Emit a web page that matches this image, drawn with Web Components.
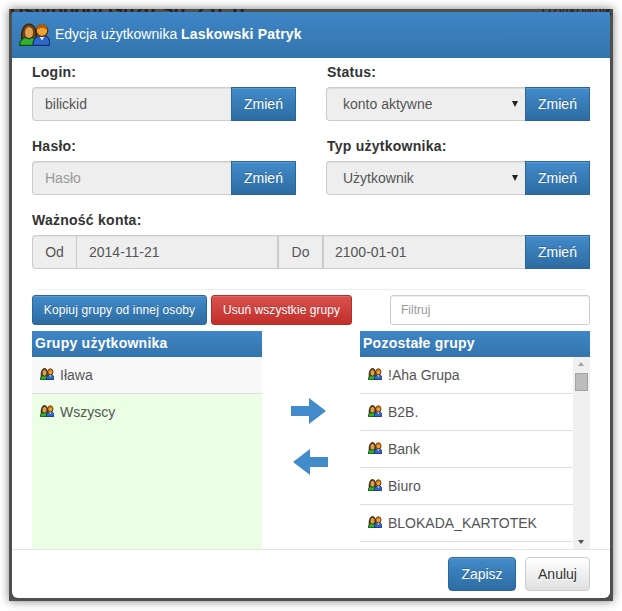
<!DOCTYPE html>
<html lang="pl"><head><meta charset="utf-8"><title>Edycja użytkownika</title>
<style>
html,body{margin:0;padding:0;background:#fff;font:14px/20px "Liberation Sans",Arial,sans-serif;color:#333}
b{letter-spacing:.2px}
</style></head><body>
<edit-screen>
  <people-icon slot="icon" size="big"></people-icon>
  <span slot="title">Edycja użytkownika <b>Laskowski Patryk</b></span>
  <field-row slot="r1">
    <input-group label="Login:" value="bilickid"></input-group>
    <input-group label="Status:" value="konto aktywne" select></input-group>
  </field-row>
  <field-row slot="r2">
    <input-group label="Hasło:" value="Hasło" muted></input-group>
    <input-group label="Typ użytkownika:" value="Użytkownik" select></input-group>
  </field-row>
  <date-row slot="r3"></date-row>
  <group-tools slot="tools"></group-tools>
  <group-list slot="left" heading="Grupy użytkownika" kind="left"></group-list>
  <transfer-arrows slot="mid"></transfer-arrows>
  <group-list slot="right" heading="Pozostałe grupy" kind="right"></group-list>
</edit-screen>
<script>
const def=(n,html,init)=>customElements.define(n,class extends HTMLElement{
  connectedCallback(){ if(this.shadowRoot)return; const r=this.attachShadow({mode:'open'}); r.innerHTML=typeof html==='function'?html(this):html; if(init)init(this,r);} });
const btnCss=`
.btn{box-sizing:border-box;display:flex;align-items:center;justify-content:center;font:14px/20px "Liberation Sans",Arial,sans-serif;color:#fff;
 background:linear-gradient(#428bca,#2d6ca2);border:1px solid #2b669a;text-shadow:0 -1px 0 rgba(0,0,0,.2);box-shadow:inset 0 1px 0 rgba(255,255,255,.15)}
`;
def('people-icon',h=>{const big=h.getAttribute('size')==='big';const s=big?[31,23]:[14,12];const w=big?1.2:1.9;return `<style>:host{display:inline-flex;flex:none}svg{display:block}</style>
<svg width="${s[0]}" height="${s[1]}" viewBox="0 0 31 23" preserveAspectRatio="none">
<path d="M3 18C1.500 10 4 1 10 1s8.500 9 7 17z" fill="#6e4212" stroke="#2a1a05" stroke-width="${w}"/>
<ellipse cx="10" cy="9.500" rx="4" ry="5.500" fill="#e0a050"/>
<path d="M.8 22.400C.3 17.500 4 15 7 14.500l3 1.500 3-1.500c3 .5 5.500 3 5 7.900z" fill="#35b035" stroke="#0d4d0d" stroke-width="${w}"/>
<path d="M14 22.400c-.5-6 3-8.900 6-9.400h6c3 .5 5 4 4.500 9.400z" fill="#2f68c8" stroke="#12306e" stroke-width="${w}"/>
<path d="M20.500 13.500l2.500 4 2.500-4z" fill="#e8eefc"/>
<circle cx="23" cy="7.500" r="5.800" fill="#f0a030" stroke="#4a2a08" stroke-width="${w}"/>
<path d="M17.500 7c0-4 2.500-6 5.500-6s5.500 2 5.500 6c-2-1.500-3.500-2-5.500-2s-3.500.5-5.500 2z" fill="#a85f12"/>
</svg>`});
def('edit-screen',`<style>
${btnCss}
:host{display:block;width:622px;height:611px;overflow:hidden;position:relative}
.frame{box-sizing:border-box;width:604px;height:592px;background:#4f4f4f;padding:3px;position:relative;overflow:hidden}
.shadow{box-shadow:0 0 9px rgba(0,0,0,.5);width:604px;height:592px;margin:9px 0 0 9px}
.bg{position:absolute;top:-9px;left:1px;right:1px;display:flex;justify-content:space-between;font:bold 19px/20px "Liberation Sans",Arial,sans-serif;color:#222}
.bg span+span{font:14px/20px "Liberation Sans",Arial,sans-serif}
.modal{position:relative;box-sizing:border-box;width:598px;height:586px;background:#fff;border-radius:0 0 6px 6px;display:flex;flex-direction:column;overflow:hidden}
header{flex:none;height:46px;box-sizing:border-box;background:linear-gradient(#3f86c6,#3274ad);color:#fff;display:flex;align-items:center;gap:5px;padding:0 0 2px 7px}
.body{flex:1;min-height:0;padding:4px 20px 0 20px;display:flex;flex-direction:column;overflow:hidden}
.cols{display:flex;flex:1;min-height:0;margin-top:6px}
.mid{flex:none;width:98px}
::slotted([slot=r2]){margin-top:15px}
::slotted([slot=r3]){margin-top:15px}
footer{flex:none;height:49px;box-sizing:border-box;border-top:1px solid #e5e5e5;display:flex;justify-content:flex-end;gap:9px;padding:7px 20px 0 0}
.btn{width:68px;height:34px;border-radius:4px}
.cancel{width:65px;color:#333;background:linear-gradient(#fff,#e0e0e0);border-color:#ccc;text-shadow:0 1px 0 #fff}
</style>
<div class="shadow"><div class="frame">
 <div class="bg"><span>Ustvobodi Guzd Sp. z o. o.</span><span>Użytkownik</span></div>
 <div class="modal">
  <header><slot name="icon"></slot><slot name="title"></slot></header>
  <div class="body">
   <slot name="r1"></slot><slot name="r2"></slot><slot name="r3"></slot><slot name="tools"></slot>
   <div class="cols"><slot name="left"></slot><div class="mid"><slot name="mid"></slot></div><slot name="right"></slot></div>
  </div>
  <footer><div class="btn">Zapisz</div><div class="btn cancel">Anuluj</div></footer>
 </div>
</div></div>`);
def('field-row',`<style>:host{display:flex;justify-content:space-between;width:558px}</style><slot></slot>`);
def('input-group',h=>`<style>
${btnCss}
:host{display:block;width:264px;margin-left:0}
label{display:block;font-weight:bold;letter-spacing:.25px;line-height:20px;height:20px;margin-bottom:5px;color:#333}
:host([select]) label{margin-left:1px}
.g{display:flex;height:34px}
.v{box-sizing:border-box;width:199px;height:34px;background:#eee;border:1px solid #ccc;border-right:0;border-radius:4px 0 0 4px;padding:6px 12px;color:${h.hasAttribute('muted')?'#999':'#555'};position:relative;box-shadow:inset 0 1px 1px rgba(0,0,0,.075)}
:host([select]) .v{padding-left:16px}
.caret{position:absolute;right:7px;top:13px;width:0;height:0;border:3.5px solid transparent;border-top:6px solid #222;border-bottom:0}
.btn{width:65px;height:34px;border-radius:0}
</style><label>${h.getAttribute('label')}</label>
<div class="g"><div class="v">${h.getAttribute('value')}${h.hasAttribute('select')?'<span class="caret"></span>':''}</div><div class="btn">Zmień</div></div>`);
def('date-row',`<style>
${btnCss}
:host{display:block;width:558px}
label{display:block;font-weight:bold;letter-spacing:.25px;height:20px;margin-bottom:5px}
.g{display:flex;height:34px;box-sizing:border-box}
.c{box-sizing:border-box;height:34px;background:#eee;border:1px solid #ccc;border-right:0;padding:6px 12px;color:#555;box-shadow:inset 0 1px 1px rgba(0,0,0,.05)}
.a{width:44px;border-radius:4px 0 0 4px;text-align:center;padding:6px 0}
.b{width:201px;border-left:1px solid #ccc}
.d{width:45px;text-align:center;padding:6px 0;border-left:2px solid #ccc}
.e{width:203px;border-left:2px solid #ccc;padding-left:11px}
.btn{width:65px;height:34px}
</style><label>Ważność konta:</label>
<div class="g"><div class="c a">Od</div><div class="c b">2014-11-21</div><div class="c d">Do</div><div class="c e">2100-01-01</div><div class="btn">Zmień</div></div>`);
def('group-tools',`<style>
${btnCss}
:host{display:block;width:558px}
hr{margin:20px 0 5px 5px;width:548px;height:1px;border:0;background:#eee}
.r{display:flex;height:30px}
.btn{height:30px;font-size:12px;line-height:18px;border-radius:3px;letter-spacing:.15px}
.k{width:175px}
.u{width:141px;margin-left:4px;background:linear-gradient(#d9534f,#c12e2a);border-color:#b92c28;letter-spacing:.05px}
.f{box-sizing:border-box;width:200px;height:30px;margin-left:auto;border:1px solid #ccc;border-radius:3px;background:#fff;color:#999;font-size:12px;line-height:28px;padding:0 10px;box-shadow:inset 0 1px 1px rgba(0,0,0,.075)}
</style><hr><div class="r"><div class="btn k">Kopiuj grupy od innej osoby</div><div class="btn u">Usuń wszystkie grupy</div><div class="f">Filtruj</div></div>`);
def('group-list',h=>{
 const left=h.getAttribute('kind')==='left';
 const items=left?['Iława','Wszyscy']:['!Aha Grupa','B2B.','Bank','Biuro','BLOKADA_KARTOTEK'];
 return `<style>
:host{display:flex;flex-direction:column;width:230px;height:218px}
.h{flex:none;height:26px;box-sizing:border-box;background:linear-gradient(#3f86c6,#3274ad);color:#fff;font-weight:bold;letter-spacing:.25px;line-height:25px;padding-left:3px}
.l{flex:1;min-height:0;display:flex;position:relative;overflow:hidden;${left?'background:#eaffe3':''}}
.items{flex:1;min-width:0}
.i{box-sizing:border-box;height:37px;padding:8px 8px;display:flex;align-items:flex-start;gap:6px;color:#555;border-bottom:1px solid #ddd;line-height:20px;background:${left?'#f9f9f9':'#fff'}}
.i people-icon{margin-top:3px}
.w{background:#eaffe3;border-bottom:0}
.sb{flex:none;width:17px;background:#f0f0f0;display:flex;flex-direction:column;align-items:center;position:relative}
.up,.dn{position:absolute;left:5px;width:0;height:0;border:4px solid transparent}
.up{top:5px;border-top:0;border-bottom:4px solid #a3a3a3;border-left-width:3.5px;border-right-width:3.5px}
.dn{bottom:5px;border-bottom:0;border-top:4px solid #505050;border-left-width:3.5px;border-right-width:3.5px}
.t{position:absolute;top:16px;left:2px;box-sizing:border-box;width:13px;height:18px;background:#bcbcbc;border:1px solid #a3a3a3}
</style><div class="h">${h.getAttribute('heading')}</div>
<div class="l"><div class="items">${items.map(t=>`<div class="i ${t==='Wszyscy'?'w':''}"><people-icon></people-icon><span>${t}</span></div>`).join('')}</div>${left?'':'<div class="sb"><span class="up"></span><span class="t"></span><span class="dn"></span></div>'}</div>`});
def('transfer-arrows',`<style>
:host{display:flex;flex-direction:column;height:100%;padding:67px 0 0 29px;gap:25px}
svg{display:block}
</style>
<svg width="35" height="26" viewBox="0 0 35 26"><path d="M0 8h18V0l17 13-17 13v-8H0z" fill="#428bca"/></svg>
<svg width="35" height="26" viewBox="0 0 35 26" style="margin-left:2px"><path d="M35 8H17V0L0 13l17 13v-8h18z" fill="#428bca"/></svg>`);
</script>
</body></html>
